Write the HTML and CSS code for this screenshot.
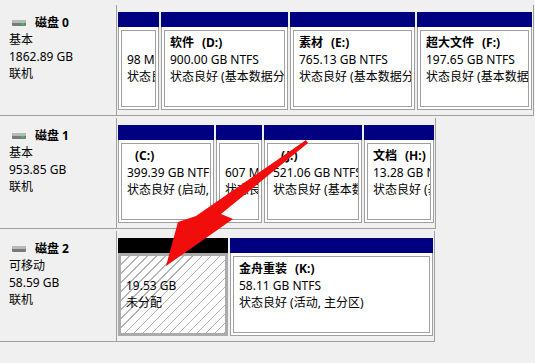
FILE: index.html
```html
<!DOCTYPE html>
<html lang="zh-CN">
<head>
  <meta charset="UTF-8" />
  <meta name="viewport" content="width=device-width, initial-scale=1" />
  <title>磁盘管理</title>
  <link rel="stylesheet" href="styles.css">
</head>
<body>
  <div class="view">

    <div class="disk">
      <div class="info">
        <div class="disk-name">
          <svg class="disk-icon" width="14" height="6" viewBox="0 0 14 6">
            <rect x="0" y="0" width="14" height="6" rx="1" fill="#7a7a7a" />
            <rect x="0" y="0" width="14" height="3" rx="1" fill="#b9b9b9" />
            <rect x="9" y="3" width="3" height="2" fill="#27c93f" />
          </svg>
          <b>磁盘 0</b>
        </div>
        <div>基本</div>
        <div>1862.89 GB</div>
        <div>联机</div>
      </div>
      <div class="parts">
        <div class="part" style="width: 41px">
          <div class="bar"></div>
          <div class="body"><div class="inner">
            <div class="vol"></div>
            <div>98 MB</div>
            <div>状态良好 (EFI 系统分区)</div>
          </div></div>
        </div>
        <div class="part" style="width: 127px">
          <div class="bar"></div>
          <div class="body"><div class="inner">
            <div class="vol">软件<span class="drv">(D:)</span></div>
            <div>900.00 GB NTFS</div>
            <div>状态良好 (基本数据分区)</div>
          </div></div>
        </div>
        <div class="part" style="width: 125px">
          <div class="bar"></div>
          <div class="body"><div class="inner">
            <div class="vol">素材<span class="drv">(E:)</span></div>
            <div>765.13 GB NTFS</div>
            <div>状态良好 (基本数据分区)</div>
          </div></div>
        </div>
        <div class="part" style="width: 115px">
          <div class="bar"></div>
          <div class="body"><div class="inner">
            <div class="vol">超大文件<span class="drv">(F:)</span></div>
            <div>197.65 GB NTFS</div>
            <div>状态良好 (基本数据分区)</div>
          </div></div>
        </div>
      </div>
    </div>

    <div class="disk">
      <div class="info">
        <div class="disk-name">
          <svg class="disk-icon" width="14" height="6" viewBox="0 0 14 6">
            <rect x="0" y="0" width="14" height="6" rx="1" fill="#7a7a7a" />
            <rect x="0" y="0" width="14" height="3" rx="1" fill="#b9b9b9" />
            <rect x="9" y="3" width="3" height="2" fill="#27c93f" />
          </svg>
          <b>磁盘 1</b>
        </div>
        <div>基本</div>
        <div>953.85 GB</div>
        <div>联机</div>
      </div>
      <div class="parts">
        <div class="part" style="width: 96px">
          <div class="bar"></div>
          <div class="body"><div class="inner">
            <div class="vol"><span class="drv">(C:)</span></div>
            <div>399.39 GB NTFS</div>
            <div>状态良好 (启动, 页面文件, 故障转储, 基本数据分区)</div>
          </div></div>
        </div>
        <div class="part" style="width: 46px">
          <div class="bar"></div>
          <div class="body"><div class="inner">
            <div class="vol"></div>
            <div>607 MB</div>
            <div>状态良好 (恢复分区)</div>
          </div></div>
        </div>
        <div class="part" style="width: 98px">
          <div class="bar"></div>
          <div class="body"><div class="inner">
            <div class="vol"><span class="drv">(J:)</span></div>
            <div>521.06 GB NTFS</div>
            <div>状态良好 (基本数据分区)</div>
          </div></div>
        </div>
        <div class="part" style="width: 70px">
          <div class="bar"></div>
          <div class="body"><div class="inner">
            <div class="vol">文档<span class="drv">(H:)</span></div>
            <div>13.28 GB NTFS</div>
            <div>状态良好 (基本数据分区)</div>
          </div></div>
        </div>
      </div>
    </div>

    <div class="disk">
      <div class="info">
        <div class="disk-name">
          <svg class="disk-icon" width="14" height="6" viewBox="0 0 14 6">
            <rect x="0" y="0" width="14" height="6" rx="1" fill="#7a7a7a" />
            <rect x="0" y="0" width="14" height="3" rx="1" fill="#b9b9b9" />
          </svg>
          <b>磁盘 2</b>
        </div>
        <div>可移动</div>
        <div>58.59 GB</div>
        <div>联机</div>
      </div>
      <div class="parts">
        <div class="part" style="width: 110px">
          <div class="bar free"></div>
          <div class="body free"><div class="inner">
            <div class="vol"></div>
            <div>19.53 GB</div>
            <div>未分配</div>
          </div></div>
        </div>
        <div class="part" style="width: 203px">
          <div class="bar"></div>
          <div class="body"><div class="inner">
            <div class="vol">金舟重装<span class="drv">(K:)</span></div>
            <div>58.11 GB NTFS</div>
            <div>状态良好 (活动, 主分区)</div>
          </div></div>
        </div>
      </div>
    </div>

    <!-- red annotation arrow -->
    <svg class="arrow" width="535" height="363" viewBox="0 0 535 363">
      <polygon fill="#f20d0d"
        points="306,140 196,216 178,222 166,266 233,219 221,214 308,143" />
    </svg>
  </div>
</body>
</html>
```

FILE: styles.css
```css
body {
  margin: 0;
  background: #f0f0f0;
  font-family: "Noto Sans", "Noto Sans CJK SC", sans-serif;
  font-size: 12px;
  line-height: 17px;
  color: #000;
  overflow: hidden;
}
.view {
  position: relative;
  height: 363px;
  padding-top: 5px;
  box-sizing: border-box;
}
.disk {
  display: flex;
  width: max-content;
  height: 110px;
  border-bottom: 1px solid #a0a0a0;
  border-right: 1px solid #a0a0a0;
  margin-bottom: 2px;
}
.info {
  width: 107px;
  border-right: 1px solid #a0a0a0;
  padding: 9px 0 0 9px;
}
.disk-name {
  display: flex;
  align-items: center;
}
.disk-icon {
  margin: 0 9px 0 3px;
}
.parts {
  display: flex;
  gap: 2px;
  padding: 7px 1px 5px 1px;
}
.part {
  display: flex;
  flex-direction: column;
}
.bar {
  height: 15px;
  flex: none;
  background: #000080;
}
.bar.free {
  background: #000;
}
.body {
  flex: 1;
  display: flex;
  min-height: 0;
  background: #fff;
  border: 1px solid #a0a0a0;
  border-top: 0;
  padding: 3px 2px 2px;
}
.inner {
  flex: 1;
  min-width: 0;
  overflow: hidden;
  white-space: nowrap;
  border: 1px solid #a0a0a0;
  padding: 3px 1px 0 5px;
}
.vol {
  height: 17px;
  font-weight: bold;
}
.drv {
  margin-left: 8px;
}
.body.free {
  padding: 0;
  border: 3px solid #ababab;
  background: repeating-linear-gradient(135deg, #fff 0 5.4px, #b4b4b4 5.4px 6.4px);
}
.body.free .inner {
  border: 0;
  padding: 4px 1px 0 5px;
}
.arrow {
  position: absolute;
  left: 0;
  top: 0;
  pointer-events: none;
}
```
